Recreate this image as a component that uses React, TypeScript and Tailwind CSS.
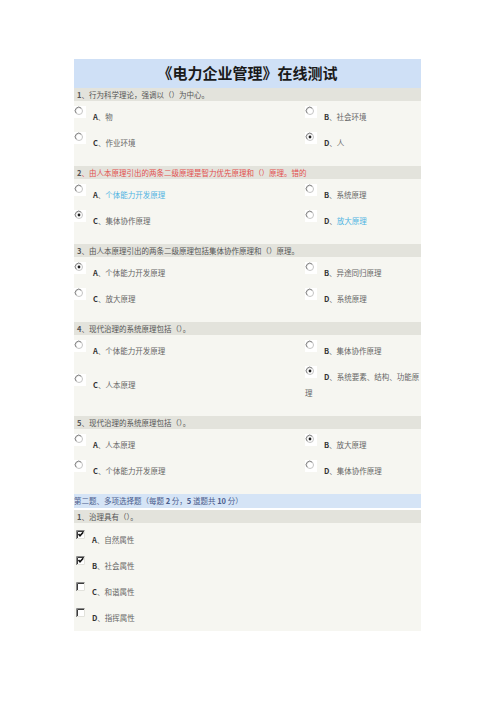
import React from "react";

type Opt = { label: string; text: string; checked?: boolean; tone?: "blue" };

type Question = {
  no: number;
  title: string;
  red?: boolean;
  options: Opt[];
};

const singles: Question[] = [
  {
    no: 1,
    title: "行为科学理论，强调以（）为中心。",
    options: [
      { label: "A", text: "物" },
      { label: "B", text: "社会环境" },
      { label: "C", text: "作业环境" },
      { label: "D", text: "人", checked: true },
    ],
  },
  {
    no: 2,
    title: "由人本原理引出的两条二级原理是智力优先原理和（）原理。错的",
    red: true,
    options: [
      { label: "A", text: "个体能力开发原理", tone: "blue" },
      { label: "B", text: "系统原理" },
      { label: "C", text: "集体协作原理", checked: true },
      { label: "D", text: "放大原理", tone: "blue" },
    ],
  },
  {
    no: 3,
    title: "由人本原理引出的两条二级原理包括集体协作原理和（）原理。",
    options: [
      { label: "A", text: "个体能力开发原理", checked: true },
      { label: "B", text: "异途同归原理" },
      { label: "C", text: "放大原理" },
      { label: "D", text: "系统原理" },
    ],
  },
  {
    no: 4,
    title: "现代治理的系统原理包括（）。",
    options: [
      { label: "A", text: "个体能力开发原理" },
      { label: "B", text: "集体协作原理" },
      { label: "C", text: "人本原理" },
      // the cell is narrow, the last character drops to a second line
      { label: "D", text: "系统要素、结构、功能原\n理", checked: true },
    ],
  },
  {
    no: 5,
    title: "现代治理的系统原理包括（）。",
    options: [
      { label: "A", text: "人本原理" },
      { label: "B", text: "放大原理", checked: true },
      { label: "C", text: "个体能力开发原理" },
      { label: "D", text: "集体协作原理" },
    ],
  },
];

const multi: Opt[] = [
  { label: "A", text: "自然属性", checked: true },
  { label: "B", text: "社会属性", checked: true },
  { label: "C", text: "和谐属性" },
  { label: "D", text: "指挥属性" },
];

function Radio({ checked }: { checked?: boolean }) {
  return (
    <svg
      width="12"
      height="12"
      viewBox="0 0 12 12"
      className="inline-block align-top relative -top-[3px] mr-[7px]"
    >
      <rect width="12" height="12" fill="#ffffff" />
      <circle cx="5" cy="5" r="3.5" fill="#ffffff" stroke="#c4c4c4" />
      <path d="M2.2 7.2 A3.5 3.5 0 0 1 7.2 2.2" stroke="#858585" fill="none" />
      {checked && <circle cx="5" cy="5" r="1.4" fill="#1f1f1f" />}
    </svg>
  );
}

function Checkbox({ checked }: { checked?: boolean }) {
  return (
    <svg
      width="12"
      height="12"
      viewBox="0 0 12 12"
      className="inline-block align-top relative -top-[3px] mr-[6px]"
    >
      <rect x="2" y="1" width="9" height="9" fill="#ffffff" />
      <path d="M2.5 10 V1.5 H11" stroke="#8a8a8a" fill="none" />
      <path d="M3.5 9 V2.5 H10" stroke="#3c3c3c" fill="none" />
      <path d="M3 9.5 H10.5 V1.5" stroke="#e2e2dc" fill="none" />
      {checked && (
        <path d="M4.5 5 L6 6.8 L9.2 3.2" stroke="#111" strokeWidth="1.6" fill="none" />
      )}
    </svg>
  );
}

function OptionText({ opt }: { opt: Opt }) {
  const lines = opt.text.split("\n");
  const color = opt.tone === "blue" ? "text-[#4fb4e2]" : "text-[#666]";
  return (
    <>
      <span className="font-bold text-[#333]">{opt.label}</span>
      <span className="text-[#666]">、</span>
      {lines.map((line, i) => (
        <React.Fragment key={i}>
          {i > 0 && <br />}
          <span className={color}>{line}</span>
        </React.Fragment>
      ))}
    </>
  );
}

function Header({ q }: { q: Question }) {
  return (
    <div className="h-[13px] bg-[#e3e3dc] pl-[3px] leading-[13px] whitespace-nowrap overflow-hidden">
      <span className="text-[#555] font-bold">{q.no}</span>
      <span className={q.red ? "text-[#e2504e]" : "text-[#555]"}>、{q.title}</span>
    </div>
  );
}

function SingleChoice({ q }: { q: Question }) {
  return (
    <div>
      <Header q={q} />
      <div className="bg-[#f6f6f1] pt-[3px] pb-[10px] grid grid-cols-[231px_116px] items-center">
        {q.options.map((o) => (
          <div key={o.label} className="py-[5px] leading-[16px]">
            <Radio checked={o.checked} />
            <OptionText opt={o} />
          </div>
        ))}
      </div>
    </div>
  );
}

export default function App() {
  return (
    <div className="min-h-[702px] bg-white">
      <div className="ml-[74px] pt-[59px] w-[347px] text-[7.5px] font-['Noto_Sans_CJK_SC',sans-serif]">
        <div className="h-[29px] bg-[#cfe0f6] flex items-center justify-center text-[15px] font-bold text-[#1a1a1a]">
          《电力企业管理》在线测试
        </div>

        {singles.map((q) => (
          <SingleChoice key={q.no} q={q} />
        ))}

        <div className="h-[14px] bg-[#d5e4f6] leading-[14px] text-[#4a5c8c] whitespace-nowrap">
          第二题、多项选择题（每题<span className="font-bold"> 2 </span>分，<span className="font-bold">5 </span>道题共<span className="font-bold"> 10 </span>分）
        </div>

        <div className="mt-[2px]">
          <div className="h-[13px] bg-[#e3e3dc] pl-[3px] leading-[13px] text-[#555]">
            <span className="font-bold">1</span>、治理具有（）。
          </div>
          <div className="bg-[#f6f6f1] pt-[4px] flex flex-col">
            {multi.map((o) => (
              <div key={o.label} className="py-[5px] leading-[16px]">
                <Checkbox checked={o.checked} />
                <OptionText opt={o} />
              </div>
            ))}
          </div>
        </div>
      </div>
    </div>
  );
}
